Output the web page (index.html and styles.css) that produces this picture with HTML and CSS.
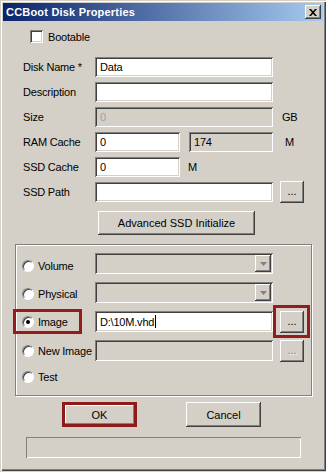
FILE: index.html
```html
<!DOCTYPE html>
<html>
<head>
	<title>CCBoot Disk Properties</title>
	<link rel="stylesheet" href="styles.css">
</head>
<body>
	<div class="window">
		<div class="titlebar">
			<span class="title">CCBoot Disk Properties</span>
			<span class="close">
				<svg width="8" height="7" viewBox="0 0 8 7"><path d="M0 0h2l2 2.2L6 0h2L5 3.5 8 7H6L4 4.8 2 7H0l3-3.5z" fill="#000"/></svg>
			</span>
		</div>

		<div class="content">
			<div class="check-row">
				<span class="checkbox"></span>
				<span>Bootable</span>
			</div>

			<div class="form">
				<div class="row">
					<span class="lbl">Disk Name *</span>
					<div class="field w-full">Data</div>
				</div>
				<div class="row">
					<span class="lbl">Description</span>
					<div class="field w-full"></div>
				</div>
				<div class="row">
					<span class="lbl">Size</span>
					<div class="field w-full off">0</div>
					<span class="unit unit-gb">GB</span>
				</div>
				<div class="row push">
					<span class="lbl">RAM Cache</span>
					<div class="field w-half">0</div>
					<div class="field w-ro ro">174</div>
					<span class="unit unit-ram">M</span>
				</div>
				<div class="row">
					<span class="lbl">SSD Cache</span>
					<div class="field w-half">0</div>
					<span class="unit unit-ssd">M</span>
				</div>
				<div class="row push">
					<span class="lbl">SSD Path</span>
					<div class="field w-full"></div>
					<button class="btn btn-dots">...</button>
				</div>
			</div>

			<div class="adv-row">
				<button class="btn btn-adv">Advanced SSD Initialize</button>
			</div>

			<div class="group">
				<div class="opt">
					<span class="opt-label low3"><span class="radio"></span>Volume</span>
					<div class="select"><span class="drop"><svg width="7" height="4" viewBox="0 0 7 4"><path d="M0 0h7L3.5 4z" fill="#808080"/></svg></span></div>
				</div>
				<div class="opt">
					<span class="opt-label low2"><span class="radio"></span>Physical</span>
					<div class="select"><span class="drop"><svg width="7" height="4" viewBox="0 0 7 4"><path d="M0 0h7L3.5 4z" fill="#808080"/></svg></span></div>
				</div>
				<div class="opt">
					<span class="opt-label low1"><span class="radio on"></span>Image</span>
					<div class="field w-full tall">D:\10M.vhd<span class="caret"></span></div>
					<button class="btn btn-dots">...</button>
					<span class="mark mark-label"></span>
					<span class="mark mark-btn"></span>
				</div>
				<div class="opt opt-last">
					<span class="opt-label"><span class="radio"></span>New Image</span>
					<div class="field w-full tall off"></div>
					<button class="btn btn-dots dim">...</button>
				</div>
				<div class="opt opt-test">
					<span class="opt-label"><span class="radio"></span>Test</span>
				</div>
			</div>

			<div class="actions">
				<button class="btn btn-act btn-ok">OK</button>
				<button class="btn btn-act">Cancel</button>
			</div>

			<div class="status"></div>
		</div>
	</div>
</body>
</html>
```

FILE: styles.css
```css
* {
	box-sizing: border-box;
}

body {
	margin: 0;
	background-color: #d4d0c8;
	font: 11px "Liberation Sans", Arial, sans-serif;
	letter-spacing: -0.2px;
	color: #000;
}

.window {
	width: 326px;
	height: 471px;
	padding: 3px;
	background-color: #d4d0c8;
	box-shadow: inset 1px 1px #d4d0c8, inset 2px 2px #fff, inset -1px -1px #404040, inset -2px -2px #808080;
}

.titlebar {
	height: 18px;
	display: flex;
	align-items: center;
	justify-content: space-between;
	padding: 0 2px 0 3px;
	background: linear-gradient(to right, #0a246a, #a6caf0);
}

.title {
	color: #fff;
	font-weight: bold;
	letter-spacing: 0.2px;
}

.close {
	width: 16px;
	height: 14px;
	display: flex;
	align-items: center;
	justify-content: center;
	background-color: #d4d0c8;
	box-shadow: inset -1px -1px #404040, inset 1px 1px #fff, inset -2px -2px #808080;
}

.content {
	padding-top: 9px;
}

.check-row {
	display: flex;
	align-items: center;
	gap: 5px;
	height: 13px;
	margin-left: 27px;
}

.checkbox {
	width: 13px;
	height: 13px;
	background-color: #fff;
	box-shadow: inset 1px 1px #808080, inset -1px -1px #fff, inset 2px 2px #404040, inset -2px -2px #d4d0c8;
}

/* text rows */
.form {
	margin-top: 14px;
}

.row {
	display: flex;
	align-items: center;
	height: 20px;
	margin-left: 20px;
	margin-bottom: 5px;
}

.row.push {
	margin-top: 1px;
}

.lbl {
	width: 72px;
}

.field {
	height: 20px;
	display: flex;
	align-items: center;
	padding: 0 5px;
	background-color: #fff;
	box-shadow: inset 1px 1px #808080, inset -1px -1px #fff, inset 2px 2px #404040, inset -2px -2px #d4d0c8;
}

.field.tall {
	height: 21px;
}

.field.off {
	background-color: #d4d0c8;
	color: #a0a0a0;
}

.field.ro {
	background-color: #d4d0c8;
}

.w-full {
	width: 178px;
}

.w-half {
	width: 85px;
}

.w-ro {
	width: 84px;
	margin-left: 9px;
}

.unit-gb {
	margin-left: 9px;
}

.unit-ram {
	margin-left: 12px;
}

.unit-ssd {
	margin-left: 8px;
}

.caret {
	width: 1px;
	height: 13px;
	margin-left: 1px;
	background-color: #000;
}

/* buttons */
.btn {
	display: flex;
	align-items: center;
	justify-content: center;
	padding: 0;
	border: none;
	background-color: #d4d0c8;
	font: inherit;
	color: #000;
	box-shadow: inset -1px -1px #404040, inset 1px 1px #fff, inset -2px -2px #808080;
}

.btn-dots {
	width: 24px;
	height: 22px;
	margin-left: 7px;
	padding-bottom: 2px;
}

.btn-dots.dim {
	color: #808080;
	text-shadow: 1px 1px #fff;
}

.adv-row {
	margin-top: 9px;
	margin-left: 95px;
}

.btn-adv {
	width: 157px;
	height: 24px;
}

/* option group */
.group {
	position: relative;
	width: 297px;
	height: 152px;
	margin: 9px 0 0 12px;
	padding: 8px 0 0 6px;
	border: 1px solid #808080;
	box-shadow: inset 1px 1px #fff, 1px 1px #fff;
}

.opt {
	position: relative;
	display: flex;
	align-items: center;
	height: 21px;
	margin-bottom: 8px;
}

.opt-last {
	margin-bottom: 9px;
}

.opt-test {
	height: 14px;
}

.opt-label {
	display: flex;
	align-items: center;
	gap: 4px;
	width: 73px;
	white-space: nowrap;
}

.opt-label.low3 {
	padding-top: 5px;
}

.opt-label.low2 {
	padding-top: 3px;
}

.opt-label.low1 {
	padding-top: 1px;
}

.radio {
	position: relative;
	width: 12px;
	height: 12px;
	flex: none;
	border-radius: 50%;
	background-color: #fff;
	border: 1px solid;
	border-color: #808080 #fff #fff #808080;
	box-shadow: inset 1px 1px #404040;
}

.radio.on::after {
	content: "";
	position: absolute;
	left: 3px;
	top: 3px;
	width: 4px;
	height: 4px;
	border-radius: 50%;
	background-color: #000;
}

.select {
	width: 178px;
	height: 21px;
	display: flex;
	align-items: center;
	justify-content: flex-end;
	padding-right: 2px;
	background-color: #d4d0c8;
	box-shadow: inset 1px 1px #808080, inset -1px -1px #fff, inset 2px 2px #404040, inset -2px -2px #d4d0c8;
}

.drop {
	width: 16px;
	height: 17px;
	display: flex;
	align-items: center;
	justify-content: center;
	background-color: #d4d0c8;
	box-shadow: inset -1px -1px #404040, inset 1px 1px #fff, inset -2px -2px #808080;
}

/* red annotation boxes */
.mark {
	position: absolute;
	border: 3px solid #961c1c;
}

.mark-label {
	left: -9px;
	top: -2px;
	width: 69px;
	height: 25px;
}

.mark-btn {
	left: 251px;
	top: -6px;
	width: 37px;
	height: 33px;
}

/* bottom */
.actions {
	display: flex;
	gap: 49px;
	margin-top: 6px;
	padding-left: 59px;
}

.btn-act {
	width: 75px;
	height: 25px;
}

.btn-ok {
	border: 3px solid #8e1b1b;
	box-shadow: inset -1px -1px #808080, inset 1px 1px #fff;
}

.status {
	width: 275px;
	height: 21px;
	margin: 10px 0 0 23px;
	box-shadow: inset 1px 1px #808080, inset -1px -1px #fff;
}
```
